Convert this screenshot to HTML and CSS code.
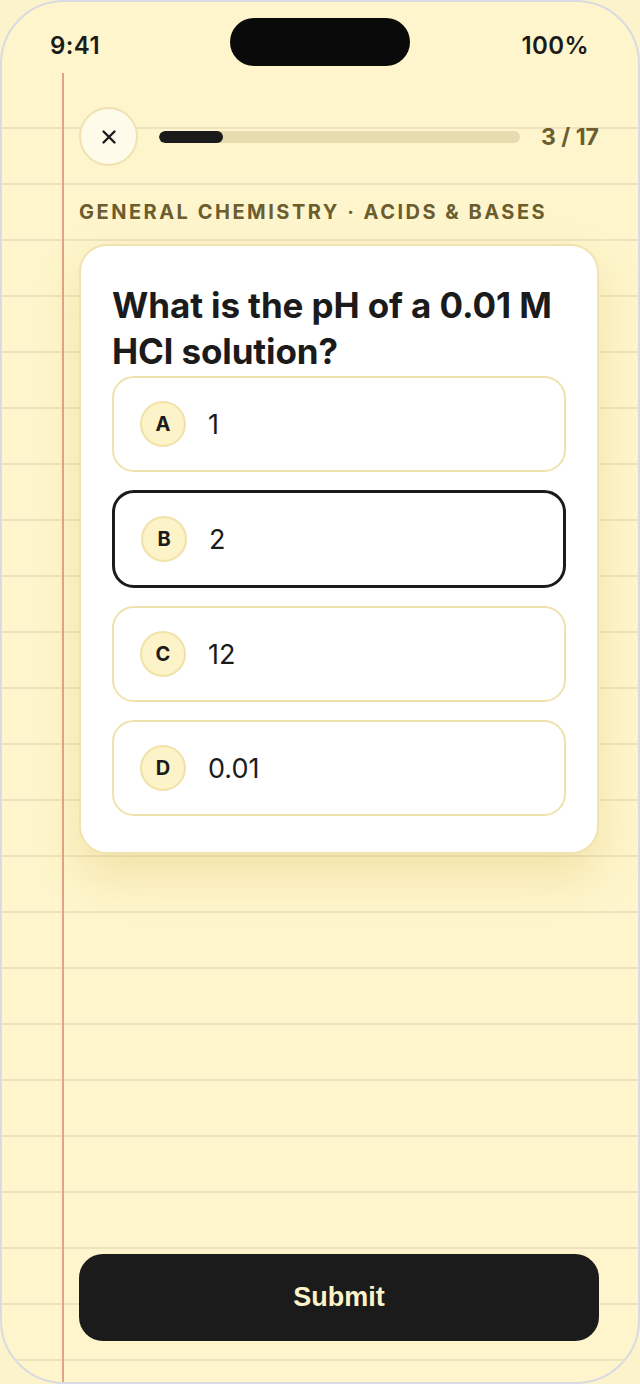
FILE: index.html
```html
<!DOCTYPE html>
<html lang="en">
<head>
  <meta charset="UTF-8">
  <meta name="viewport" content="width=device-width, initial-scale=1.0">
  <title>Quiz | Acids &amp; Bases</title>
  <link rel="stylesheet" href="styles.css">
</head>
<body>
  <div class="phone">
    <div class="status-bar">
      <span class="time">9:41</span>
      <div class="island"></div>
      <span class="battery">100%</span>
    </div>

    <main class="paper">
      <header class="quiz-head">
        <button class="close-btn" type="button" aria-label="Close">
          <svg width="16" height="16" viewBox="0 0 16 16" fill="none" stroke="#1b1b1b" stroke-width="2.4" stroke-linecap="round">
            <path d="M2.5 2.5 L13.5 13.5 M13.5 2.5 L2.5 13.5"/>
          </svg>
        </button>
        <div class="progress"><div class="progress-fill" style="width: 17.6%"></div></div>
        <span class="count">3 / 17</span>
      </header>

      <p class="topic">General Chemistry · Acids &amp; Bases</p>

      <section class="card">
        <h1 class="question">What is the pH of a 0.01 M HCl solution?</h1>
        <ul class="options">
          <li class="option"><span class="letter">A</span><span class="answer">1</span></li>
          <li class="option selected"><span class="letter">B</span><span class="answer">2</span></li>
          <li class="option"><span class="letter">C</span><span class="answer">12</span></li>
          <li class="option"><span class="letter">D</span><span class="answer">0.01</span></li>
        </ul>
      </section>

      <button class="submit" type="button">Submit</button>
    </main>
  </div>
</body>
</html>
```

FILE: styles.css
```css
* { box-sizing: border-box; }
body { margin: 0; background: #fbf3cc; font-family: Inter, "Noto Sans", sans-serif; color: #1b1b1b; }

.phone { width: 640px; height: 1384px; display: flex; flex-direction: column; background: #fef5cc; border: 2px solid #d9dbe0; border-radius: 64px; overflow: hidden; }

.status-bar { height: 71px; flex-shrink: 0; display: grid; grid-template-columns: 1fr auto 1fr; align-items: start; padding: 0 49px 0 48px; font-size: 24px; font-weight: 600; letter-spacing: 0.4px; }
.status-bar .time, .status-bar .battery { margin-top: 30px; line-height: 28px; }
.status-bar .battery { justify-self: end; }
.island { width: 180px; height: 48px; margin-top: 16px; background: #0a0a0a; border-radius: 24px; }

/* ruled paper with the red margin line on top */
.paper {
  flex: 1;
  display: flex;
  flex-direction: column;
  padding: 34px 39px 0 77px;
  background:
    linear-gradient(to right, transparent 60px, #e2a386 60px, #e2a386 62px, transparent 62px),
    linear-gradient(to bottom, transparent 54px, #ede4bf 54px, #ede4bf 56px);
  background-size: 100% 100%, 100% 56px;
  background-repeat: no-repeat, repeat;
}

.quiz-head { display: flex; align-items: center; height: 59px; }
.close-btn { width: 59px; height: 59px; flex-shrink: 0; display: flex; align-items: center; justify-content: center; padding: 0; background: #fffbea; border: 2px solid #efe2b0; border-radius: 50%; cursor: pointer; }
.progress { flex: 1; height: 12px; margin: 0 21px; background: #e6dcaf; border-radius: 6px; overflow: hidden; }
.progress-fill { height: 100%; background: #1b1b1b; border-radius: 6px; }
.count { font-size: 23px; font-weight: 700; color: #6b5d2f; white-space: nowrap; }

.topic { margin: 33px 0 19px; font-size: 20px; line-height: 26px; font-weight: 700; letter-spacing: 2.5px; text-transform: uppercase; color: #6b5d2f; white-space: nowrap; }

.card { background: #fff; border: 2px solid #f0e3b2; border-radius: 28px; padding: 36px 31px 36px; box-shadow: 0 22px 46px rgba(205, 170, 50, 0.24); }
.question { margin: 0 0 2px; font-size: 35px; line-height: 46px; font-weight: 700; letter-spacing: -0.1px; }

.options { list-style: none; margin: 0; padding: 0; display: flex; flex-direction: column; gap: 18px; }
.option { display: flex; align-items: center; gap: 22px; padding: 23px 26px; border: 2px solid #efe2ad; border-radius: 22px; cursor: pointer; }
.option.selected { border: 3px solid #1b1b1b; }
.letter { width: 46px; height: 46px; flex-shrink: 0; display: flex; align-items: center; justify-content: center; background: #fdf3c8; border: 2px solid #f0e2a8; border-radius: 50%; font-size: 20px; font-weight: 700; }
.answer { font-size: 27px; }

.submit { margin: auto 0 41px; height: 87px; background: #1b1b1b; color: #fdf3c8; border: none; border-radius: 24px; font-family: "Liberation Sans", Arial, sans-serif; font-size: 27px; font-weight: 700; cursor: pointer; }
```
